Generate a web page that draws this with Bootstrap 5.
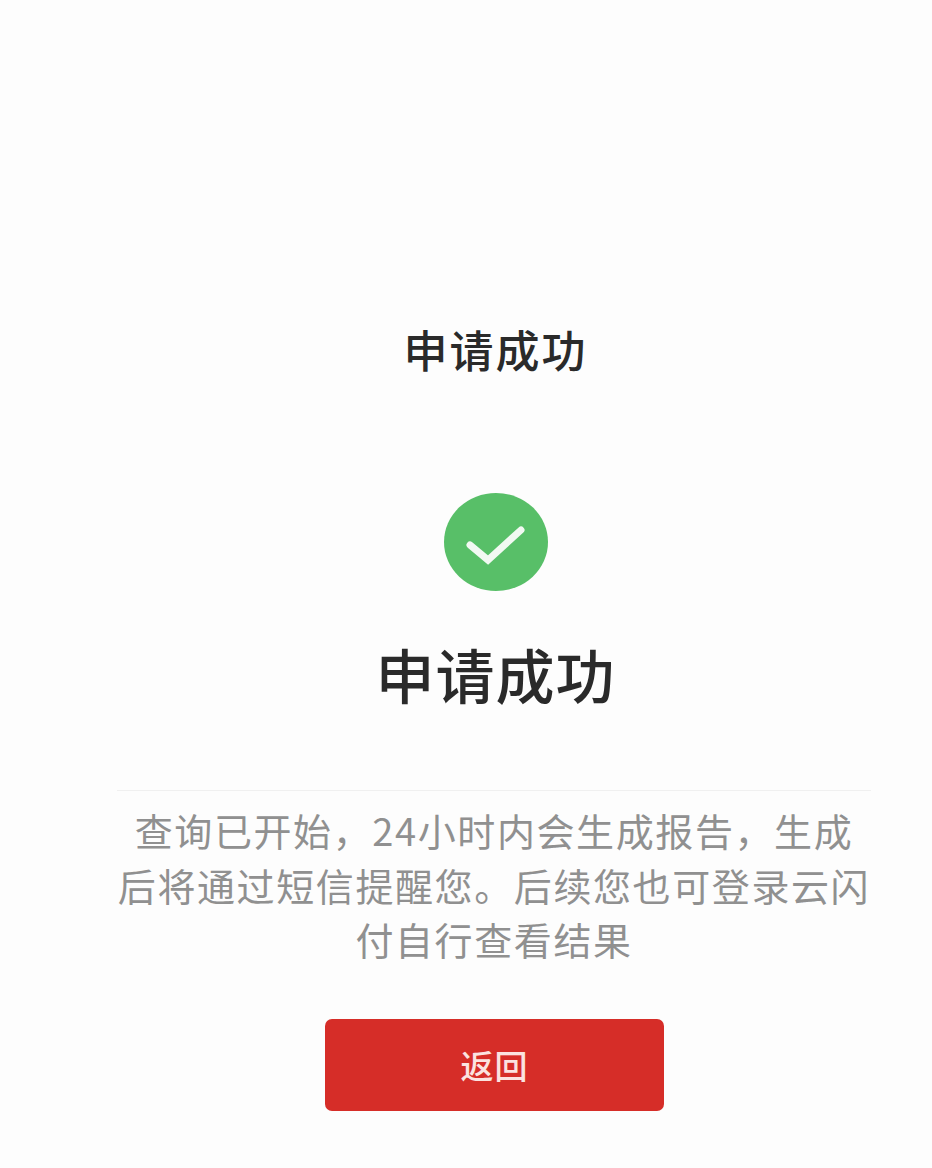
<!DOCTYPE html>
<html lang="zh"><head><meta charset="utf-8">
<link href="https://cdn.jsdelivr.net/npm/bootstrap@5.3.0/dist/css/bootstrap.min.css" rel="stylesheet">
<style>
html,body{height:1168px;overflow:hidden}
body{background:#fdfdfd;font-family:"Noto Sans CJK SC","Liberation Sans",sans-serif;color:#2b2b2b}
.page-wrap{width:932px;padding-top:323px}
.top-title{font-size:44px;line-height:52px;font-weight:500;letter-spacing:2px;margin-left:59px;color:#2a2a2a}
.ok-icon{width:104px;height:98px;margin-top:118px;margin-left:59px}
.big-title{font-size:59px;line-height:72px;font-weight:500;letter-spacing:1px;margin-top:47px;margin-left:59px;color:#2a2a2a}
.msg-box{width:754px;margin-left:117px;margin-top:80px;border-top:1px solid #f0f0f0;padding-top:12px;font-size:38px;line-height:54.5px;color:#909090;letter-spacing:1.6px;text-align:center;white-space:nowrap}
.back-btn{width:339px;height:92px;margin-left:325px;margin-top:52px;background:#d62d28;border:0;border-radius:7px;color:#fbe3e0;font-size:33px;font-weight:500;letter-spacing:1px;line-height:88px;padding:0}
.back-btn:hover{background:#d62d28;color:#fbe3e0}
</style></head>
<body>
<div class="page-wrap">
<div class="d-flex justify-content-center top-title">申请成功</div>
<div class="d-flex justify-content-center"><svg class="ok-icon" viewBox="0 0 104 98"><ellipse cx="52" cy="49" rx="52" ry="49" fill="#58bf68"/><path d="M26 52 L44 67 L77 37" fill="none" stroke="#f2f9f2" stroke-width="7" stroke-linecap="round" stroke-linejoin="miter"/></svg></div>
<div class="d-flex justify-content-center big-title">申请成功</div>
<div class="msg-box">查询已开始&#xFF0C;24小时内会生成报告&#xFF0C;生成<br>后将通过短信提醒您。后续您也可登录云闪<br>付自行查看结果</div>
<button type="button" class="btn back-btn d-block">返回</button>
</div>
<script src="https://cdn.jsdelivr.net/npm/bootstrap@5.3.0/dist/js/bootstrap.bundle.min.js"></script>
</body></html>
